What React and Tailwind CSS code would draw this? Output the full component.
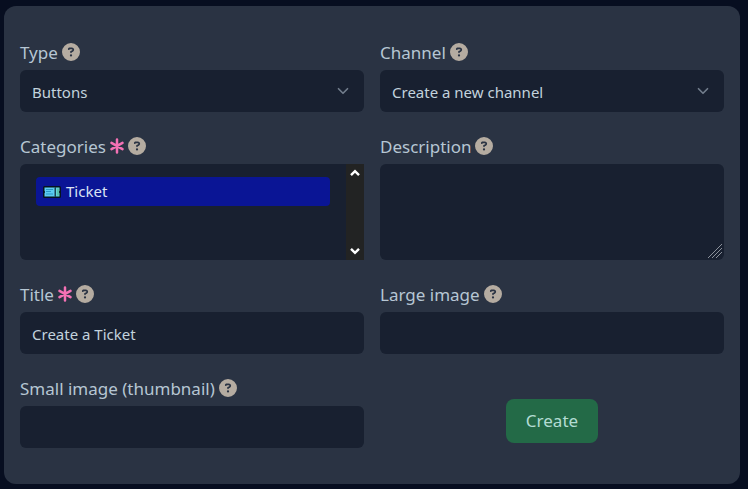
import React, { useState } from 'react';
import { ChevronDown } from 'lucide-react';
import { FaCircleQuestion } from 'react-icons/fa6';

const fieldClass =
    'block w-full h-[42px] px-3 pt-0.5 rounded-md bg-[#182030] text-[15px] text-[#c3d3dd] outline-none appearance-none';

const TicketIcon = ({ className }) => (
    <svg viewBox="0 0 18 12" className={className} aria-hidden="true">
        <rect x="0" y="0" width="18" height="12" rx="1.5" fill="#06141f" />
        <path d="M1.5 1.5h10v9h-10z" fill="#5ccdf2" />
        <path d="M13 1.5h3.5v9H13z" fill="#63d8dc" />
        <path d="M3 3.5h7M3 5.5h5M3 8h7" stroke="#2a97c6" strokeWidth="1" />
        <path d="M12 1.5v9" stroke="#5ccdf2" strokeWidth="1" strokeDasharray="1 1" />
        <path d="M15 2.5v7" stroke="#4fae82" strokeWidth="1" />
        <circle cx="1" cy="6" r="1" fill="#06141f" />
        <circle cx="17" cy="6" r="1" fill="#06141f" />
    </svg>
);

const Asterisk = ({ className }) => (
    <svg
        viewBox="0 0 14 16"
        className={className}
        fill="none"
        stroke="currentColor"
        strokeWidth="2.5"
        strokeLinecap="round"
        aria-hidden="true"
    >
        <path d="M7 1.5v13M1.5 4.8l11 6.4M12.5 4.8l-11 6.4" />
    </svg>
);

const ScrollArrow = ({ className }) => (
    <svg
        viewBox="0 0 10 8"
        className={className}
        fill="none"
        stroke="currentColor"
        strokeWidth="2.4"
        aria-hidden="true"
    >
        <path d="M1 6.2l4-4 4 4" />
    </svg>
);

const Field = ({ id, label, required, children }) => (
    <div>
        <div className="flex items-center gap-1 h-7 mb-1">
            <label htmlFor={id} className="pt-0.5 text-[17px] leading-7 text-[#b6c6d3]">
                {label}
            </label>
            {required && <Asterisk className="w-[14px] h-4 text-[#f471b5]" />}
            <FaCircleQuestion className="w-[18px] h-[18px] text-[#b5aca1]" />
        </div>
        {children}
    </div>
);

const SelectField = ({ id, options }) => (
    <div className="relative">
        <select id={id} className={fieldClass}>
            {options.map((option) => (
                <option key={option}>{option}</option>
            ))}
        </select>
        <ChevronDown
            className="absolute right-3 top-3 w-[18px] h-[18px] text-[#727d8c] pointer-events-none"
            strokeWidth={2.25}
        />
    </div>
);

const App = () => {
    const [title, setTitle] = useState('Create a Ticket');
    const [categories, setCategories] = useState(['ticket']);

    const handleCategories = (e) => {
        setCategories(Array.from(e.target.selectedOptions, (option) => option.value));
    };

    return (
        <div className="min-h-screen bg-[#070e20] pt-[6px] pr-2 pb-[5px] pl-1 font-['Noto_Sans',sans-serif]">
            <form
                onSubmit={(e) => e.preventDefault()}
                className="grid grid-cols-2 gap-x-4 gap-y-5 px-4 pt-8 pb-9 rounded-xl bg-[#2a3343]"
            >
                <Field id="type" label="Type">
                    <SelectField id="type" options={['Buttons']} />
                </Field>

                <Field id="channel" label="Channel">
                    <SelectField id="channel" options={['Create a new channel']} />
                </Field>

                <Field id="categories" label="Categories" required>
                    <div className="relative flex h-24 rounded-l-md overflow-hidden bg-[#182030]">
                        <select
                            id="categories"
                            multiple
                            value={categories}
                            onChange={handleCategories}
                            className="flex-1 min-w-0 px-4 py-[13px] text-[15px] outline-none appearance-none bg-transparent [scrollbar-width:none]"
                        >
                            <option
                                value="ticket"
                                className="h-[29px] pt-1 pb-0 pr-2 pl-[30px] rounded-sm text-[#c3d3dd] checked:bg-linear-to-r checked:from-[#0a1595] checked:to-[#0a1595] checked:[-webkit-text-fill-color:#dbe3f4]"
                            >
                                Ticket
                            </option>
                        </select>
                        <TicketIcon className="absolute left-[23px] top-[22px] w-[18px] h-3 pointer-events-none" />
                        <div className="flex flex-col justify-between items-center w-[18px] py-[5px] bg-[#222323] text-white">
                            <ScrollArrow className="w-[10px] h-2" />
                            <ScrollArrow className="w-[10px] h-2 rotate-180" />
                        </div>
                    </div>
                </Field>

                <Field id="description" label="Description">
                    <div className="relative">
                        <textarea
                            id="description"
                            className="block w-full h-24 px-3 py-2 rounded-md bg-[#182030] text-[15px] text-[#c3d3dd] outline-none resize-none"
                        />
                        <svg
                            viewBox="0 0 15 15"
                            className="absolute right-px bottom-px w-[15px] h-[15px] pointer-events-none"
                            stroke="#8b919b"
                            strokeWidth="1"
                            aria-hidden="true"
                        >
                            <path d="M0 14L14 0M4 14L14 4M8 14L14 8" />
                        </svg>
                    </div>
                </Field>

                <Field id="title" label="Title" required>
                    <input
                        id="title"
                        type="text"
                        value={title}
                        onChange={(e) => setTitle(e.target.value)}
                        className={fieldClass}
                    />
                </Field>

                <Field id="large-image" label="Large image">
                    <input id="large-image" type="text" className={fieldClass} />
                </Field>

                <Field id="small-image" label="Small image (thumbnail)">
                    <input id="small-image" type="text" className={fieldClass} />
                </Field>

                <div className="flex items-end justify-center pb-[5px]">
                    <button
                        type="submit"
                        className="h-11 px-5 rounded-lg bg-[#236a47] text-[17px] text-[#b3dcd3]"
                    >
                        Create
                    </button>
                </div>
            </form>
        </div>
    );
};

export default App;
